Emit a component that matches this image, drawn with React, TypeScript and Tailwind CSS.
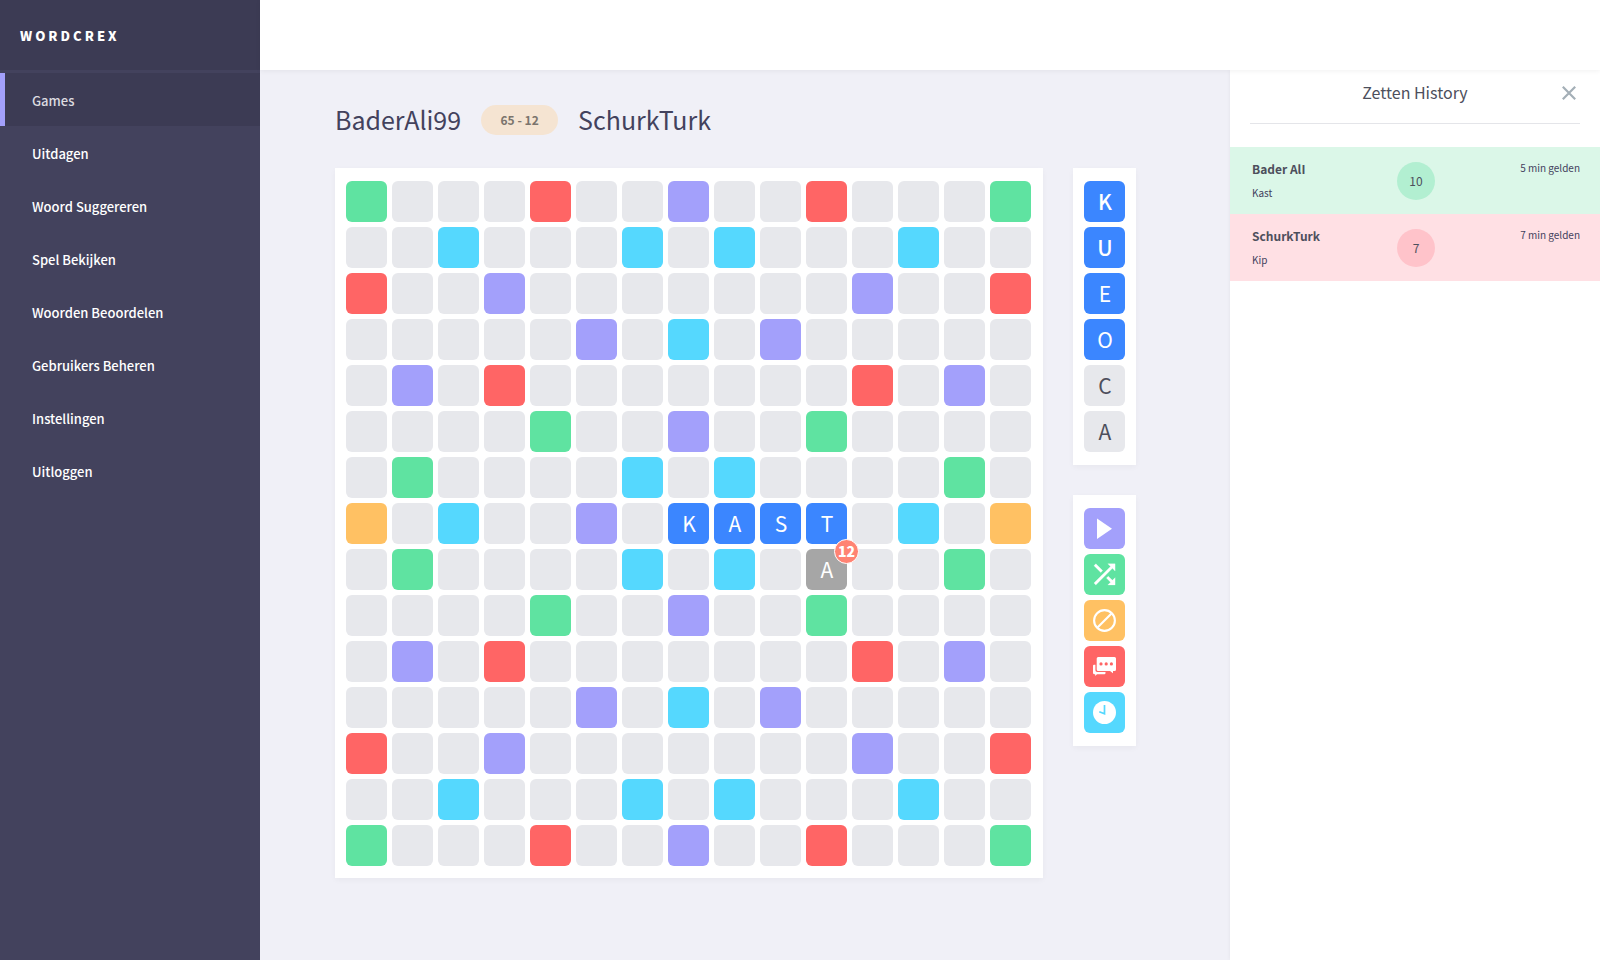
import type { ReactNode } from "react";

const NAV = [
  "Games",
  "Uitdagen",
  "Woord Suggereren",
  "Spel Bekijken",
  "Woorden Beoordelen",
  "Gebruikers Beheren",
  "Instellingen",
  "Uitloggen",
];

// g green, r red, p purple, c cyan, o orange, . plain
const BOARD = [
  "g...r..p..r...g",
  "..c...c.c...c..",
  "r..p.......p..r",
  ".....p.c.p.....",
  ".p.r.......r.p.",
  "....g..p..g....",
  ".g....c.c....g.",
  "o.c..p......c.o",
  ".g....c.c....g.",
  "....g..p..g....",
  ".p.r.......r.p.",
  ".....p.c.p.....",
  "r..p.......p..r",
  "..c...c.c...c..",
  "g...r..p..r...g",
];

const COLORS: Record<string, string> = {
  g: "bg-[#5fe3a1]",
  r: "bg-[#ff6565]",
  p: "bg-[#a3a0fb]",
  c: "bg-[#55d8fe]",
  o: "bg-[#ffc163]",
  ".": "bg-[#e7e8ec]",
};

const PLACED: Record<string, string> = { "7-7": "K", "7-8": "A", "7-9": "S", "7-10": "T" };

const RACK = [
  { letter: "K", style: "bg-[#3b86ff] font-medium text-white" },
  { letter: "U", style: "bg-[#3b86ff] font-medium text-white" },
  { letter: "E", style: "bg-[#3b86ff] text-white" },
  { letter: "O", style: "bg-[#3b86ff] text-white" },
  { letter: "C", style: "bg-[#e7e8ec] text-[#4d4f5c]" },
  { letter: "A", style: "bg-[#e7e8ec] text-[#4d4f5c]" },
];

const TILE = "flex size-[41px] items-center justify-center rounded-md pb-px pl-px text-[21px] leading-6";
const PANEL = "bg-white shadow-[0_2px_6px_rgba(0,0,0,0.04)]";

function Cell({ row, col, kind }: { row: number; col: number; kind: string }) {
  const key = `${row}-${col}`;
  if (PLACED[key]) {
    return <div className={`${TILE} bg-[#3b86ff] text-white`}>{PLACED[key]}</div>;
  }
  if (key === "8-10") {
    return (
      <div className={`${TILE} relative bg-[#a6a6a6] text-white`}>
        A
        <span className="absolute -top-2.5 -right-3 flex size-[25px] items-center justify-center rounded-full border border-white bg-[#ff8373] pb-px text-sm leading-4 font-black">
          12
        </span>
      </div>
    );
  }
  return <div className={`${TILE} ${COLORS[kind]}`} />;
}

function Action({ label, color, children }: { label: string; color: string; children: ReactNode }) {
  return (
    <button
      type="button"
      aria-label={label}
      className={`flex size-[41px] cursor-pointer items-center justify-center rounded-md text-white ${color}`}
    >
      <svg viewBox="0 0 41 41" className="size-[41px]" fill="currentColor" aria-hidden="true">
        {children}
      </svg>
    </button>
  );
}

function HistoryRow(props: {
  name: string;
  word: string;
  score: number;
  time: string;
  row: string;
  badge: string;
}) {
  return (
    <li className={`grid h-[67px] grid-cols-[1fr_38px_1fr] pr-5 pl-[22px] ${props.row}`}>
      <div className="pt-3.5">
        <p className="text-xs leading-4 font-bold text-[#4d4f5c]">{props.name}</p>
        <p className="mt-2 text-[10px] leading-4 text-[#43425d]">{props.word}</p>
      </div>
      <span
        className={`flex size-[38px] items-center justify-center self-center rounded-full text-xs leading-4 text-[#4d4f5c] ${props.badge}`}
      >
        {props.score}
      </span>
      <span className="pt-[13px] text-right text-[10px] leading-4 text-[#43425d]">{props.time}</span>
    </li>
  );
}

export default function App() {
  return (
    <div className="flex min-h-screen bg-[#f0f0f7] font-['Noto_Sans_CJK_SC','Noto_Sans',sans-serif]">
      <aside className="w-[260px] shrink-0 bg-[#43425d]">
        <div className="flex h-[70px] items-center bg-[#3c3b54] pt-0.5 pl-5 text-[13px] font-black tracking-[3px] text-white">
          WORDCREX
        </div>
        <nav className="mt-[3px] flex flex-col">
          {NAV.map((item, i) => (
            <a
              key={item}
              href="#"
              className={
                i === 0
                  ? "flex h-[53px] items-center border-l-[5px] border-[#a3a0fb] bg-[#3c3b54] pt-[3px] pl-[27px] text-[13px] font-medium text-[#dcdce0]"
                  : "flex h-[53px] items-center pt-[3px] pl-8 text-[13px] font-medium text-white"
              }
            >
              {item}
            </a>
          ))}
        </nav>
      </aside>

      <div className="flex min-w-0 grow flex-col">
        <header className="z-10 h-[70px] bg-white shadow-[0_1px_5px_rgba(0,0,0,0.06)]" />
        <div className="flex grow">
          <main className="min-w-0 grow pt-[35px] pb-10 pl-[75px]">
            <div className="flex h-[30px] items-center gap-5 text-[25px] leading-8 text-[#43425d]">
              <h1 className="pb-0.5">BaderAli99</h1>
              <span className="flex h-[30px] w-[77px] items-center justify-center rounded-full bg-[#f5e4d2] text-xs leading-4 font-bold text-[#7b746d]">
                65 - 12
              </span>
              <h1 className="pb-0.5">SchurkTurk</h1>
            </div>
            <div className="mt-[33px] flex items-start gap-[30px]">
              <section
                aria-label="Board"
                className={`grid grid-cols-[repeat(15,41px)] gap-[5px] pt-[13px] pr-3 pb-3 pl-[11px] ${PANEL}`}
              >
                {BOARD.flatMap((line, r) =>
                  line.split("").map((kind, c) => <Cell key={`${r}-${c}`} row={r} col={c} kind={kind} />),
                )}
              </section>
              <div className="flex flex-col gap-[30px]">
                <section aria-label="Rack" className={`flex flex-col gap-[5px] px-[11px] py-[13px] ${PANEL}`}>
                  {RACK.map(({ letter, style }) => (
                    <button type="button" key={letter} className={`${TILE} cursor-pointer ${style}`}>
                      {letter}
                    </button>
                  ))}
                </section>
                <section aria-label="Actions" className={`flex flex-col gap-[5px] px-[11px] py-[13px] ${PANEL}`}>
                  <Action label="Play" color="bg-[#a3a0fb]">
                    <path d="M13 10.5v20.5l15-10.2z" />
                  </Action>
                  <Action label="Shuffle" color="bg-[#5fe3a1]">
                    <path
                      transform="translate(4.7 4.5) scale(1.32)"
                      stroke="currentColor"
                      strokeWidth="0.2"
                      d="M10.59 9.17L5.41 4 4 5.41l5.17 5.17 1.42-1.41zM14.5 4l2.04 2.04L4 18.59 5.41 20 17.96 7.46 20 9.5V4h-5.5zm.33 9.41l-1.41 1.41 3.13 3.13L14.5 20H20v-5.5l-2.04 2.04-3.13-3.13z"
                    />
                  </Action>
                  <Action label="Pass" color="bg-[#ffc163]">
                    <g fill="none" stroke="currentColor" strokeWidth="2.1">
                      <circle cx="20.5" cy="20.5" r="10.4" />
                      <path d="M13 28L28 13" />
                    </g>
                  </Action>
                  <Action label="Chat" color="bg-[#ff6565]">
                    <path
                      fillRule="evenodd"
                      d="M14.2 11h16.3a1.5 1.5 0 0 1 1.5 1.5v11a1.5 1.5 0 0 1-1.5 1.5h-1.5v2.2l-3-2.2H14.2a1.5 1.5 0 0 1-1.5-1.5v-11a1.5 1.500 0 0 1 1.5-1.5zM17 16.300a1.600 1.600 0 1 0 0 3.200 1.600 1.600 0 0 0 0-3.200zm5.200 0a1.600 1.600 0 1 0 0 3.200 1.600 1.600 0 0 0 0-3.200zm5.200 0a1.600 1.600 0 1 0 0 3.200 1.600 1.600 0 0 0 0-3.200z"
                    />
                    <path d="M10 18.700h1.400v5.600a1.800 1.800 0 0 0 1.800 1.800h8.300v.900a1.200 1.200 0 0 1-1.200 1.200h-7.300l-1.800 1.800v-1.800h-.700a1.500 1.500 0 0 1-1.500-1.500v-7a1 1 0 0 1 1-1z" />
                  </Action>
                  <Action label="Clock" color="bg-[#55d8fe]">
                    <circle cx="20.5" cy="20.5" r="11.5" />
                    <path d="M20.5 13v8.8l-5.2-2" fill="none" stroke="#55d8fe" strokeWidth="1.7" />
                  </Action>
                </section>
              </div>
            </div>
          </main>

          <aside className="w-[370px] shrink-0 bg-white shadow-[0_0_4px_rgba(0,0,0,0.06)]">
            <div className="mx-5 flex h-[54px] items-center border-b border-[#e4e5e9] pb-2">
              <h2 className="grow pb-0.5 pl-[22px] text-center text-base leading-6 text-[#4d4f5c]">Zetten History</h2>
              <button type="button" aria-label="Close" className="flex h-6 w-[22px] cursor-pointer items-center justify-center">
                <svg viewBox="0 0 14 14" className="size-3.5" fill="none" stroke="#a4afb7" strokeWidth="2.2" aria-hidden="true">
                  <path d="M.8.8l12.4 12.4M13.2.8L.8 13.2" />
                </svg>
              </button>
            </div>
            <ul className="mt-[23px]">
              <HistoryRow name="Bader AlI" word="Kast" score={10} time="5 min gelden" row="bg-[#dbf7e8]" badge="bg-[#b2efd1]" />
              <HistoryRow name="SchurkTurk" word="Kip" score={7} time="7 min gelden" row="bg-[#ffe0e4]" badge="bg-[#ffc3ca]" />
            </ul>
          </aside>
        </div>
      </div>
    </div>
  );
}
